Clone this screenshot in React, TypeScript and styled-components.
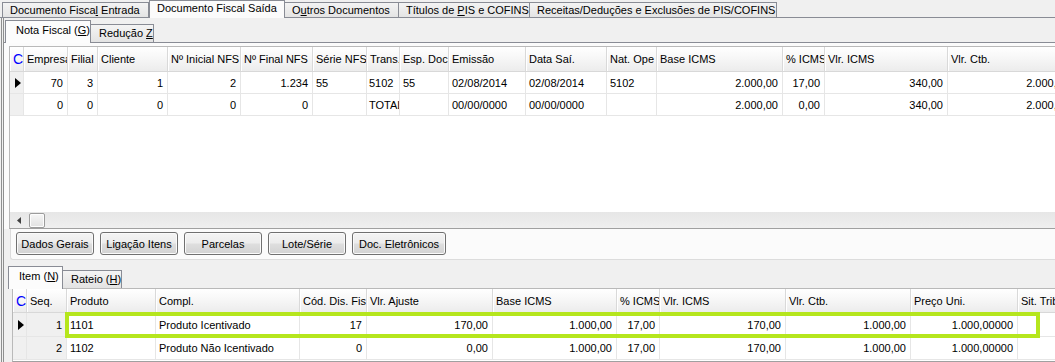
import React from "react";
import styled, { createGlobalStyle, css } from "styled-components";

const GlobalStyle = createGlobalStyle`
  html, body { margin: 0; padding: 0; background: #f0f0f0; overflow: hidden; }
  body { font-family: "Liberation Sans", Arial, sans-serif; font-size: 11px; color: #000; }
  #root { width: 1055px; height: 362px; }
`;

const Window = styled.div`
  width: 1055px;
  height: 362px;
  overflow: hidden;
  background: #f0f0f0;
  display: flex;
  flex-direction: column;
`;

const TopStrip = styled.div`
  flex: 0 0 18px;
  box-sizing: border-box;
  height: 18px;
  display: flex;
  align-items: flex-end;
  padding-left: 2px;
  border-bottom: 1px solid #898c95;
`;

const TopTab = styled.div<{ $active?: boolean; $w: number }>`
  box-sizing: border-box;
  flex: 0 0 ${(p) => p.$w}px;
  padding-left: 7px;
  white-space: nowrap;
  border: 1px solid #898c95;
  border-bottom: none;
  position: relative;
  ${(p) =>
    p.$active
      ? css`
          height: 18px;
          margin-bottom: -1px;
          background: #fbfbfb;
          z-index: 1;
          line-height: 14px;
        `
      : css`
          height: 15px;
          margin-left: -1px;
          background: linear-gradient(#f3f3f3, #e4e4e4);
          line-height: 14px;
          &:first-child { margin-left: 0; }
        `}
`;

const U = styled.span`
  text-decoration: underline;
`;

const PageOuter = styled.div`
  flex: 1;
  min-height: 0;
  display: flex;
  flex-direction: column;
  margin-left: 1px;
  border-left: 1px solid #8e8f8f;
  padding-left: 1px;
  background: #f0f0f0;
`;

const PageInner = styled.div`
  flex: 1;
  min-height: 0;
  display: flex;
  flex-direction: column;
  border-left: 1px solid #8e8f8f;
`;

const SubStrip = styled.div<{ $h: number; $pl: number }>`
  flex: 0 0 ${(p) => p.$h}px;
  height: ${(p) => p.$h}px;
  display: flex;
  align-items: flex-end;
  padding-left: ${(p) => p.$pl}px;
  position: relative;
  z-index: 2;
`;

const SubTab = styled.div<{ $active?: boolean; $w: number }>`
  box-sizing: border-box;
  flex: 0 0 ${(p) => p.$w}px;
  white-space: nowrap;
  border: 1px solid #898c95;
  border-bottom: none;
  ${(p) =>
    p.$active
      ? css`
          height: 23px;
          margin-bottom: -1px;
          background: #fcfcfc;
          padding-left: 10px;
          line-height: 19px;
        `
      : css`
          height: 18px;
          margin-left: -1px;
          background: linear-gradient(#f4f4f4, #e3e3e3);
          padding-left: 8px;
          line-height: 17px;
        `}
`;

const UpperPanel = styled.div`
  flex: 0 0 auto;
  border-top: 1px solid #898c95;
  padding: 3px 0 0 5px;
  background: #fbfbfb;
`;

const GridBox = styled.div<{ $h: number }>`
  position: relative;
  height: ${(p) => p.$h}px;
  box-sizing: border-box;
  border-top: 1px solid #b9b9b9;
  border-left: 1px solid #b9b9b9;
  border-bottom: 1px solid #a0a0a0;
  background: #fff;
  overflow: hidden;
  display: flex;
  flex-direction: column;
`;

const HeaderRow = styled.div<{ $h: number }>`
  display: flex;
  flex: 0 0 ${(p) => p.$h}px;
  height: ${(p) => p.$h}px;
  box-sizing: border-box;
  width: max-content;
  min-width: 100%;
  background: linear-gradient(#ffffff 0%, #f7f7f7 45%, #ececec 100%);
  border-bottom: 1px solid #d8d8d8;
`;

const HCell = styled.div<{ $w: number }>`
  flex: 0 0 ${(p) => p.$w}px;
  box-sizing: border-box;
  padding-left: 3px;
  overflow: hidden;
  white-space: nowrap;
  display: flex;
  align-items: center;
  border-right: 1px solid #d9d9d9;
  box-shadow: inset 1px 0 0 #ffffff;
`;

const CornerCell = styled(HCell)`
  padding-left: 3px;
  color: #0000ff;
  font-size: 14px;
`;

const Body = styled.div`
  flex: 1;
  min-height: 0;
  overflow: hidden;
`;

const DataRow = styled.div<{ $h: number }>`
  display: flex;
  height: ${(p) => p.$h}px;
  box-sizing: border-box;
  width: max-content;
  min-width: 100%;
  border-bottom: 1px solid #e6e6e6;
`;

const DCell = styled.div<{ $w: number; $align?: "l" | "r"; $gray?: boolean; $pad?: number }>`
  flex: 0 0 ${(p) => p.$w}px;
  box-sizing: border-box;
  overflow: hidden;
  white-space: nowrap;
  display: flex;
  align-items: center;
  justify-content: ${(p) => (p.$align === "r" ? "flex-end" : "flex-start")};
  padding: ${(p) => (p.$align === "r" ? `0 ${p.$pad ?? 4}px 0 0` : `0 0 0 ${p.$pad ?? 3}px`)};
  border-right: 1px solid #e6e6e6;
  background: ${(p) => (p.$gray ? "#f0f0f0" : "#ffffff")};
`;

const IndCell = styled(DCell)`
  padding: 0 0 0 5px;
  background: #f0f0f0;
`;

const HScroll = styled.div`
  flex: 0 0 16px;
  height: 16px;
  display: flex;
  align-items: center;
  background: linear-gradient(#e6e6e6, #efefef);
`;

const ScrollArrow = styled.div`
  width: 17px;
  height: 16px;
  display: flex;
  align-items: center;
  justify-content: center;
`;

const Thumb = styled.div`
  width: 16px;
  height: 15px;
  margin-left: 2px;
  box-sizing: border-box;
  border: 1px solid #9c9c9c;
  border-radius: 2px;
  background: linear-gradient(#f6f6f6, #e2e2e2);
  box-shadow: inset 0 0 0 1px #fdfdfd;
`;

const ButtonPanel = styled.div`
  flex: 0 0 auto;
  display: flex;
  gap: 6px;
  margin-left: 6px;
  padding: 3px 0 4px 5px;
  border-left: 1px solid #dcdcdc;
  border-bottom: 1px solid #dcdcdc;
  border-bottom-left-radius: 3px;
  background: #fbfbfb;
`;

const Button = styled.button<{ $w: number }>`
  width: ${(p) => p.$w}px;
  height: 23px;
  box-sizing: border-box;
  border: 1px solid #707070;
  border-radius: 3px;
  background: linear-gradient(#f4f4f4 0%, #ececec 48%, #dedede 52%, #d2d2d2 100%);
  box-shadow: inset 0 0 0 1px #fafafa;
  font-family: "Liberation Sans", Arial, sans-serif;
  font-size: 11px;
  color: #000;
  padding: 0;
  margin: 0;
`;

const LowerArea = styled.div`
  flex: 1;
  min-height: 0;
  display: flex;
  flex-direction: column;
  background: #f0f0f0;
`;

const LowerGridWrap = styled.div`
  flex: 1;
  min-height: 0;
  padding-left: 8px;
  display: flex;
  flex-direction: column;
`;

const Highlight = styled.div`
  position: absolute;
  left: 52px;
  top: 23px;
  width: 975px;
  height: 26px;
  box-sizing: border-box;
  border: 4px solid #b5e61d;
  pointer-events: none;
`;

type Col = { t: string; w: number; a?: "l" | "r"; gray?: boolean; pad?: number };

const upperCols: Col[] = [
  { t: "Empresa", w: 44, a: "r" },
  { t: "Filial", w: 30, a: "r" },
  { t: "Cliente", w: 70, a: "r" },
  { t: "Nº Inicial NFS", w: 73, a: "r" },
  { t: "Nº Final NFS", w: 72, a: "r" },
  { t: "Série NFS", w: 54, a: "l" },
  { t: "Trans.", w: 33, a: "l", pad: 2 },
  { t: "Esp. Doc.", w: 49, a: "l" },
  { t: "Emissão", w: 77, a: "l" },
  { t: "Data Saí.", w: 81, a: "l" },
  { t: "Nat. Ope", w: 50, a: "l" },
  { t: "Base ICMS", w: 126, a: "r" },
  { t: "% ICMS", w: 42, a: "r" },
  { t: "Vlr. ICMS", w: 123, a: "r" },
  { t: "Vlr. Ctb.", w: 126, a: "r" },
];

const upperRows: string[][] = [
  ["70", "3", "1", "2", "1.234", "55", "5102", "55", "02/08/2014", "02/08/2014", "5102", "2.000,00", "17,00", "340,00", "2.000,00"],
  ["0", "0", "0", "0", "0", "", "TOTAL", "", "00/00/0000", "00/00/0000", "", "2.000,00", "0,00", "340,00", "2.000,00"],
];

const lowerCols: Col[] = [
  { t: "Seq.", w: 40, a: "r", gray: true },
  { t: "Produto", w: 89, a: "l" },
  { t: "Compl.", w: 144, a: "l" },
  { t: "Cód. Dis. Fis", w: 67, a: "r" },
  { t: "Vlr. Ajuste", w: 126, a: "r" },
  { t: "Base ICMS", w: 124, a: "r" },
  { t: "% ICMS", w: 43, a: "r" },
  { t: "Vlr. ICMS", w: 126, a: "r" },
  { t: "Vlr. Ctb.", w: 125, a: "r" },
  { t: "Preço Uni.", w: 107, a: "r" },
  { t: "Sit. Trib", w: 80, a: "l" },
];

const lowerRows: string[][] = [
  ["1", "1101", "Produto Icentivado", "17", "170,00", "1.000,00", "17,00", "170,00", "1.000,00", "1.000,00000", ""],
  ["2", "1102", "Produto Não Icentivado", "0", "0,00", "1.000,00", "17,00", "170,00", "1.000,00", "1.000,00000", ""],
];

const Arrow = () => (
  <svg width="6" height="10" viewBox="0 0 6 10">
    <path d="M0 0 L6 5 L0 10 Z" fill="#000" />
  </svg>
);

const LeftArrow = () => (
  <svg width="4" height="7" viewBox="0 0 4 7">
    <path d="M4 0 L0 3.5 L4 7 Z" fill="#404040" />
  </svg>
);

type GridProps = {
  cols: Col[];
  rows: string[][];
  indW: number;
  headH: number;
  rowH: number[];
};

const GridContent: React.FC<GridProps> = ({ cols, rows, indW, headH, rowH }) => (
  <>
    <HeaderRow $h={headH}>
      <CornerCell $w={indW}>C</CornerCell>
      {cols.map((c) => (
        <HCell key={c.t} $w={c.w}>
          {c.t}
        </HCell>
      ))}
    </HeaderRow>
    <Body>
      {rows.map((r, i) => (
        <DataRow key={i} $h={rowH[i]}>
          <IndCell $w={indW}>{i === 0 ? <Arrow /> : null}</IndCell>
          {cols.map((c, j) => (
            <DCell key={j} $w={c.w} $align={c.a} $gray={c.gray} $pad={c.pad}>
              {r[j]}
            </DCell>
          ))}
        </DataRow>
      ))}
    </Body>
  </>
);

export default function App() {
  return (
    <>
      <GlobalStyle />
      <Window>
        <TopStrip>
          <TopTab $w={147}>
            Documento Fisca<U>l</U> Entrada
          </TopTab>
          <TopTab $active $w={136}>
            Documento Fiscal Saída
          </TopTab>
          <TopTab $w={115}>
            O<U>u</U>tros Documentos
          </TopTab>
          <TopTab $w={132}>
            Títulos de <U>P</U>IS e COFINS
          </TopTab>
          <TopTab $w={248}>Receitas/Deduções e Exclusões de PIS/COFINS</TopTab>
        </TopStrip>
        <PageOuter>
          <PageInner>
            <SubStrip $h={24} $pl={1}>
              <SubTab $active $w={86}>
                Nota Fiscal (<U>G</U>)
              </SubTab>
              <SubTab $w={64}>
                Redução <U>Z</U>
              </SubTab>
            </SubStrip>
            <UpperPanel>
              <GridBox $h={183}>
                <GridContent cols={upperCols} rows={upperRows} indW={14} headH={25} rowH={[22, 22]} />
                <HScroll>
                  <ScrollArrow>
                    <LeftArrow />
                  </ScrollArrow>
                  <Thumb />
                </HScroll>
              </GridBox>
            </UpperPanel>
            <ButtonPanel>
              <Button $w={78}>Dados Gerais</Button>
              <Button $w={78}>Ligação Itens</Button>
              <Button $w={78}>Parcelas</Button>
              <Button $w={78}>Lote/Série</Button>
              <Button $w={94}>Doc. Eletrônicos</Button>
            </ButtonPanel>
            <LowerArea>
              <SubStrip $h={28} $pl={4}>
                <SubTab $active $w={55}>
                  Item (<U>N</U>)
                </SubTab>
                <SubTab $w={59}>
                  Rateio (<U>H</U>)
                </SubTab>
              </SubStrip>
              <LowerGridWrap>
                <GridBox $h={80}>
                  <GridContent cols={lowerCols} rows={lowerRows} indW={14} headH={24} rowH={[24, 23]} />
                  <Highlight />
                </GridBox>
              </LowerGridWrap>
            </LowerArea>
          </PageInner>
        </PageOuter>
      </Window>
    </>
  );
}
